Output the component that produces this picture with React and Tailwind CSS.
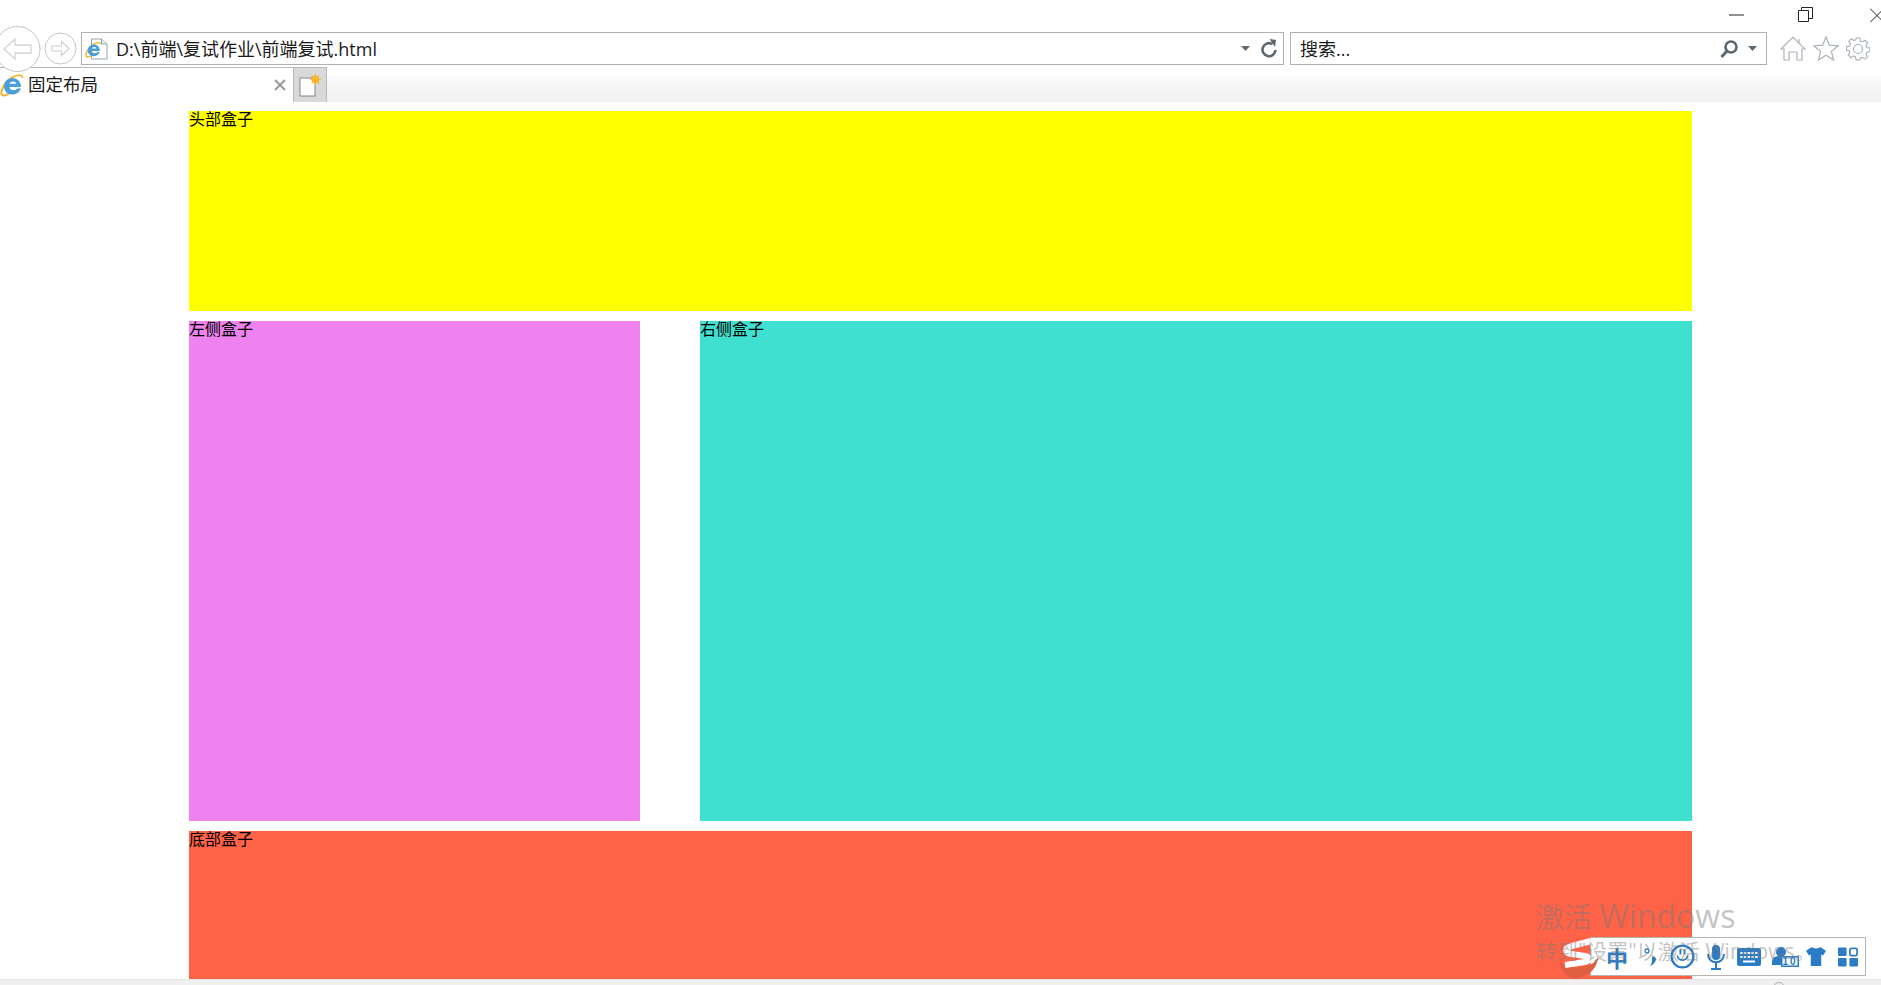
const CJK = "font-['Open_Sans','Noto_Sans_CJK_SC',sans-serif]";

function IELogo({ size = 22 }) {
  return (
    <svg width={size} height={size} viewBox="0 0 24 24" className="shrink-0">
      <path d="M2 17.500C3 11 9 4.500 17 2.500c3-.8 5.500 0 5.600 2.200" fill="none" stroke="#f5b51e" strokeWidth="1.800" />
      <path d="M2 17c-1.600 3.800-.5 6 2.500 5.600 1.500-.2 3-1 4.500-2" fill="none" stroke="#f5a81e" strokeWidth="1.800" />
      <path d="M4 13.500C4 8.500 8 5 12.500 5S21 8.500 21 14H9.500c.2 3 4.800 4.500 8 1.500H21c-2 4.500-5.500 6-9 6-4.500 0-8-3.500-8-8zm5.500-2.800h6.800c-.4-3-6-3-6.800 0z" fill="#4a9fdb" fillRule="evenodd" />
    </svg>
  );
}

function Caret({ color = "#5f6b75" }) {
  return (
    <svg width="9" height="5" viewBox="0 0 9 5" className="shrink-0">
      <path d="M0 0h9L4.500 5z" fill={color} />
    </svg>
  );
}

function NavBack() {
  return (
    <svg width="41" height="46" viewBox="0 0 41 46" className="shrink-0">
      <circle cx="17.500" cy="23" r="22.500" fill="#fff" stroke="#c4c4c4" />
      <path d="M4 23 15 13v6h16v8H15v6z" fill="#fff" stroke="#d4d4d4" strokeWidth="1.300" />
    </svg>
  );
}

function NavForward() {
  return (
    <svg width="33" height="33" viewBox="0 0 33 33" className="shrink-0 ml-[3px]">
      <circle cx="16.500" cy="16.500" r="15.500" fill="#fff" stroke="#c4c4c4" />
      <path d="M25 16.500 17.500 9.500v4.500H8v5h9.500v4.500z" fill="#fff" stroke="#d0d0d0" strokeWidth="1.200" />
    </svg>
  );
}

function ToolHome() {
  return (
    <svg width="26" height="25" viewBox="0 0 26 25" fill="none" stroke="#a9b2ba" strokeWidth="1.200">
      <path d="M1 13 13 1l12 12-3 0v11h-5v-8H9v8H4V13z" />
      <path d="M19 3v4" />
    </svg>
  );
}
function ToolStar() {
  return (
    <svg width="26" height="25" viewBox="0 0 26 25" fill="none" stroke="#a9b2ba" strokeWidth="1.200">
      <path d="M13 1l3.400 8.200 8.800.6-6.800 5.600 2.200 8.600L13 19.300l-7.600 4.700 2.200-8.600L.8 9.800l8.800-.6z" />
    </svg>
  );
}
function ToolGear() {
  return (
    <svg width="24" height="24" viewBox="0 0 24 24" fill="none" stroke="#a9b2ba" strokeWidth="1.200">
      <path d="M10 1h4l.6 3.200 2 .9L19.400 3.300l2.800 2.800-1.800 2.800.9 2 3.200.6v4l-3.200.6-.9 2 1.800 2.800-2.800 2.300-2.800-1.800-2 .9L14 24h-4l-.6-3.200-2-.9-2.800 1.800-2.800-2.800 1.800-2.800-.9-2L0 14v-4l3.200-.6.9-2L2.300 4.600 5.100 1.800l2.800 1.800 2-.9z" transform="scale(.95) translate(.6 .1)" />
      <circle cx="12" cy="12" r="4.500" />
    </svg>
  );
}

function Search() {
  return (
    <svg width="20" height="20" viewBox="0 0 20 20" fill="none" className="shrink-0">
      <circle cx="12" cy="8" r="5.500" stroke="#5c6770" strokeWidth="2.600" />
      <path d="M8 12 2.500 18" stroke="#5c6770" strokeWidth="3" />
    </svg>
  );
}

function Refresh() {
  return (
    <svg width="16" height="19" viewBox="0 0 16 19" fill="none" className="shrink-0">
      <path d="M11.500 5.200A6.500 6.500 0 1 0 14.500 11" stroke="#5c6770" strokeWidth="2.600" />
      <path d="M8.500 0l6.500 1-1 7z" fill="#5c6770" />
    </svg>
  );
}

function PageIcon() {
  return (
    <div className="relative w-[23px] h-[22px] shrink-0">
      <svg width="23" height="22" viewBox="0 0 23 22" className="absolute left-0 top-0">
        <path d="M6.500 1h10l5.500 5v15H6.500z" fill="#fff" stroke="#8fa3b5" />
        <path d="M16.500 1v5h5.500" fill="#e6eef5" stroke="#8fa3b5" />
      </svg>
      <div className="absolute left-0 top-[3px]"><IELogo size={17} /></div>
    </div>
  );
}

function NewTabIcon() {
  return (
    <svg width="23" height="23" viewBox="0 0 23 23">
      <rect x="1" y="4" width="15" height="18" fill="#fff" stroke="#7c8790" />
      <circle cx="16.500" cy="5.500" r="3.800" fill="#f7b52c" />
      <path d="M16.500 0v11M11 5.500h11M12.700 1.700l7.600 7.600M20.300 1.700l-7.600 7.600" stroke="#f7b52c" strokeWidth="1.100" />
    </svg>
  );
}

function WindowButtons() {
  return (
    <div className="h-[32px] flex items-start justify-end relative">
      <svg width="15" height="2" viewBox="0 0 15 2" className="mt-[14px] mr-[54px]"><path d="M0 1h15" stroke="#222" strokeWidth="1" /></svg>
      <svg width="15" height="15" viewBox="0 0 15 15" fill="none" className="mt-[7px] mr-[57px]" stroke="#222">
        <path d="M.5 3.500h10v11H.5zM3.500 3.500v-3h11v11h-4" />
      </svg>
      <svg width="11" height="15" viewBox="0 0 11 15" fill="none" className="mt-[8px]" stroke="#222"><path d="M0 .5 14 14.500M14 .5 0 14.500" /></svg>
    </div>
  );
}

function AddressRow() {
  return (
    <div className="h-[33px] flex items-center relative">
      <NavBack />
      <NavForward />
      <div className="ml-[4px] w-[1203px] h-[33px] border border-[#b0b0b0] flex items-center pl-[3px] pr-[6px] bg-white shrink-0">
        <PageIcon />
        <span className="ml-[8px] text-[18px] text-[#1a1a1a] leading-none whitespace-nowrap flex-1">D:\前端\复试作业\前端复试.html</span>
        <Caret />
        <div className="w-[11px]" />
        <Refresh />
      </div>
      <div className="ml-[6px] w-[477px] h-[33px] border border-[#b0b0b0] flex items-center pl-[9px] pr-[9px] bg-white shrink-0">
        <span className="text-[18px] text-[#1a1a1a] leading-none flex-1">搜索...</span>
        <Search />
        <div className="w-[9px]" />
        <Caret />
      </div>
      <div className="ml-[13px] flex items-center gap-[7px]">
        <ToolHome />
        <ToolStar />
        <ToolGear />
      </div>
    </div>
  );
}

function TabRow() {
  return (
    <div className="mt-[2px] h-[35px] flex bg-[linear-gradient(#ffffff_0%,#ffffff_22%,#f6f6f6_45%,#f0f0f0_100%)]">
      <div className="w-[293px] border-t border-[#b8b8b8] bg-white flex items-center">
        <IELogo size={24} />
        <span className="ml-[4px] text-[17.500px] leading-none text-[#1a1a1a] flex-1">固定布局</span>
        <svg width="12" height="12" viewBox="0 0 12 12" className="mr-[7px]"><path d="M1 1l10 10M11 1 1 11" stroke="#9a9a9a" strokeWidth="2" /></svg>
      </div>
      <div className="w-[34px] bg-[#d9d9d9] border border-b-0 border-[#b8b8b8] flex items-center justify-center">
        <NewTabIcon />
      </div>
      <div className="flex-1" />
    </div>
  );
}

function Box({ className, children }) {
  return <div className={`text-[16px] leading-[14px] text-black font-['Noto_Sans_CJK_SC',sans-serif] ${className}`}>{children}</div>;
}

function ImeToolbar() {
  return (
    <div className="absolute left-[1590px] top-[937px] w-[276px] h-[39px] border border-[#b4b4b4] bg-white flex items-center">
      <svg width="38" height="40" viewBox="0 0 38 40" className="absolute left-[-31px] top-0">
        <path d="M0 24C6 30 20 31 30 27c4-2 7-5 8-9 0 12-10 22-24 22C6 40 1 33 0 24z" fill="#de5f41" />
        <path d="M31 3 12 8C4 10 4 15 12 16l13 2c5 1 5 5 0 6L5 27" fill="none" stroke="#fff" strokeWidth="6" />
      </svg>
      <span className="ml-[11px] w-[30px] text-center text-[22px] leading-none font-bold text-[#2b7cc7] font-['Noto_Sans_CJK_SC',sans-serif]">中</span>
      <svg width="14" height="22" viewBox="0 0 14 22" className="ml-[12px]" fill="#2b7cc7">
        <circle cx="3" cy="5" r="2" fill="none" stroke="#2b7cc7" strokeWidth="1.300" />
        <path d="M8 11c4-1 5 2 3 5-1 2-3 3-5 4 1-2 2-3 2-5z" />
      </svg>
      <svg width="25" height="25" viewBox="0 0 24 24" className="ml-[12px]" fill="none" stroke="#2b7cc7">
        <circle cx="12" cy="12" r="10.500" strokeWidth="2.200" />
        <path d="M7 11c1 6 9 6 10 0" strokeWidth="1.500" />
        <path d="M10 5v5M14 5v5" strokeWidth="1.800" />
      </svg>
      <svg width="20" height="26" viewBox="0 0 20 26" className="ml-[11px]" fill="#2b7cc7">
        <rect x="6" y="1" width="8" height="15" rx="4" />
        <path d="M2 10c0 11 16 11 16 0" fill="none" stroke="#2b7cc7" strokeWidth="2" />
        <path d="M10 19v5M5 25h10" stroke="#2b7cc7" strokeWidth="2" />
      </svg>
      <svg width="24" height="18" viewBox="0 0 24 18" className="ml-[11px]">
        <rect width="24" height="18" rx="2" fill="#2b7cc7" />
        <path d="M3 5h18M3 9h18" stroke="#fff" strokeWidth="2" strokeDasharray="2.500 1.300" />
        <path d="M6 13.500h12" stroke="#fff" strokeWidth="2" />
      </svg>
      <svg width="27" height="20" viewBox="0 0 27 20" className="ml-[11px]">
        <circle cx="9" cy="5" r="5" fill="#2b7cc7" />
        <path d="M0 15c0-5 4-6 9-6s7 1 7 6v3H0z" fill="#2b7cc7" />
        <rect x="9" y="9" width="18" height="11" fill="#2b7cc7" />
        <rect x="10.500" y="10.500" width="15" height="8" fill="#fff" />
        <text x="18" y="18" fontSize="10" fontWeight="700" textAnchor="middle" fill="#2b7cc7" fontFamily="Liberation Sans, sans-serif" letterSpacing="2">10</text>
      </svg>
      <svg width="20" height="19" viewBox="0 0 21 20" className="ml-[7px]">
        <path d="M6 0c1 2 8 2 9 0l6 4-3 5-2-1v12H5V8L3 9 0 4z" fill="#2b7cc7" />
      </svg>
      <svg width="20" height="20" viewBox="0 0 21 20" className="ml-[12px]" fill="#2b7cc7">
        <rect width="9" height="9" rx="1" />
        <rect x="12.500" y="1" width="7.500" height="7.500" rx="1.500" fill="none" stroke="#2b7cc7" strokeWidth="1.800" />
        <rect y="11" width="9" height="9" rx="1" />
        <rect x="12" y="11" width="9" height="9" rx="1" />
      </svg>
    </div>
  );
}

function Watermark() {
  return (
    <div className="absolute left-[1536px] top-[897px] pointer-events-none text-[rgba(120,120,120,0.45)] font-['Open_Sans','Noto_Sans_CJK_SC',sans-serif] whitespace-nowrap">
      <div className="text-[28px] leading-[38px]">激活 <span className="text-[32px]">Windows</span></div>
      <div className="text-[21px] leading-[30px]">转到"设置"以激活 Windows。</div>
    </div>
  );
}

export default function App() {
  return (
    <div className={`relative w-[1881px] h-[985px] overflow-hidden bg-white flex flex-col ${CJK}`}>
      <WindowButtons />
      <AddressRow />
      <TabRow />
      <div className="mt-[9px] w-[1503px] mx-auto flex flex-col gap-[10px]">
        <Box className="h-[200px] bg-[#ffff00]">头部盒子</Box>
        <div className="flex justify-between">
          <Box className="w-[451px] h-[500px] bg-[#ee82ee]">左侧盒子</Box>
          <Box className="w-[992px] h-[500px] bg-[#40e0d0]">右侧盒子</Box>
        </div>
        <Box className="h-[148px] bg-[#ff6347]">底部盒子</Box>
      </div>
      <div className="relative h-[6px] bg-[#f0f0f0] border-t border-[#e4e4e4] overflow-hidden">
        <div className="absolute left-[1773px] top-[2px] w-[12px] h-[12px] rounded-full border border-[#b0b0b0]" />
      </div>
      <ImeToolbar />
      <Watermark />
    </div>
  );
}
